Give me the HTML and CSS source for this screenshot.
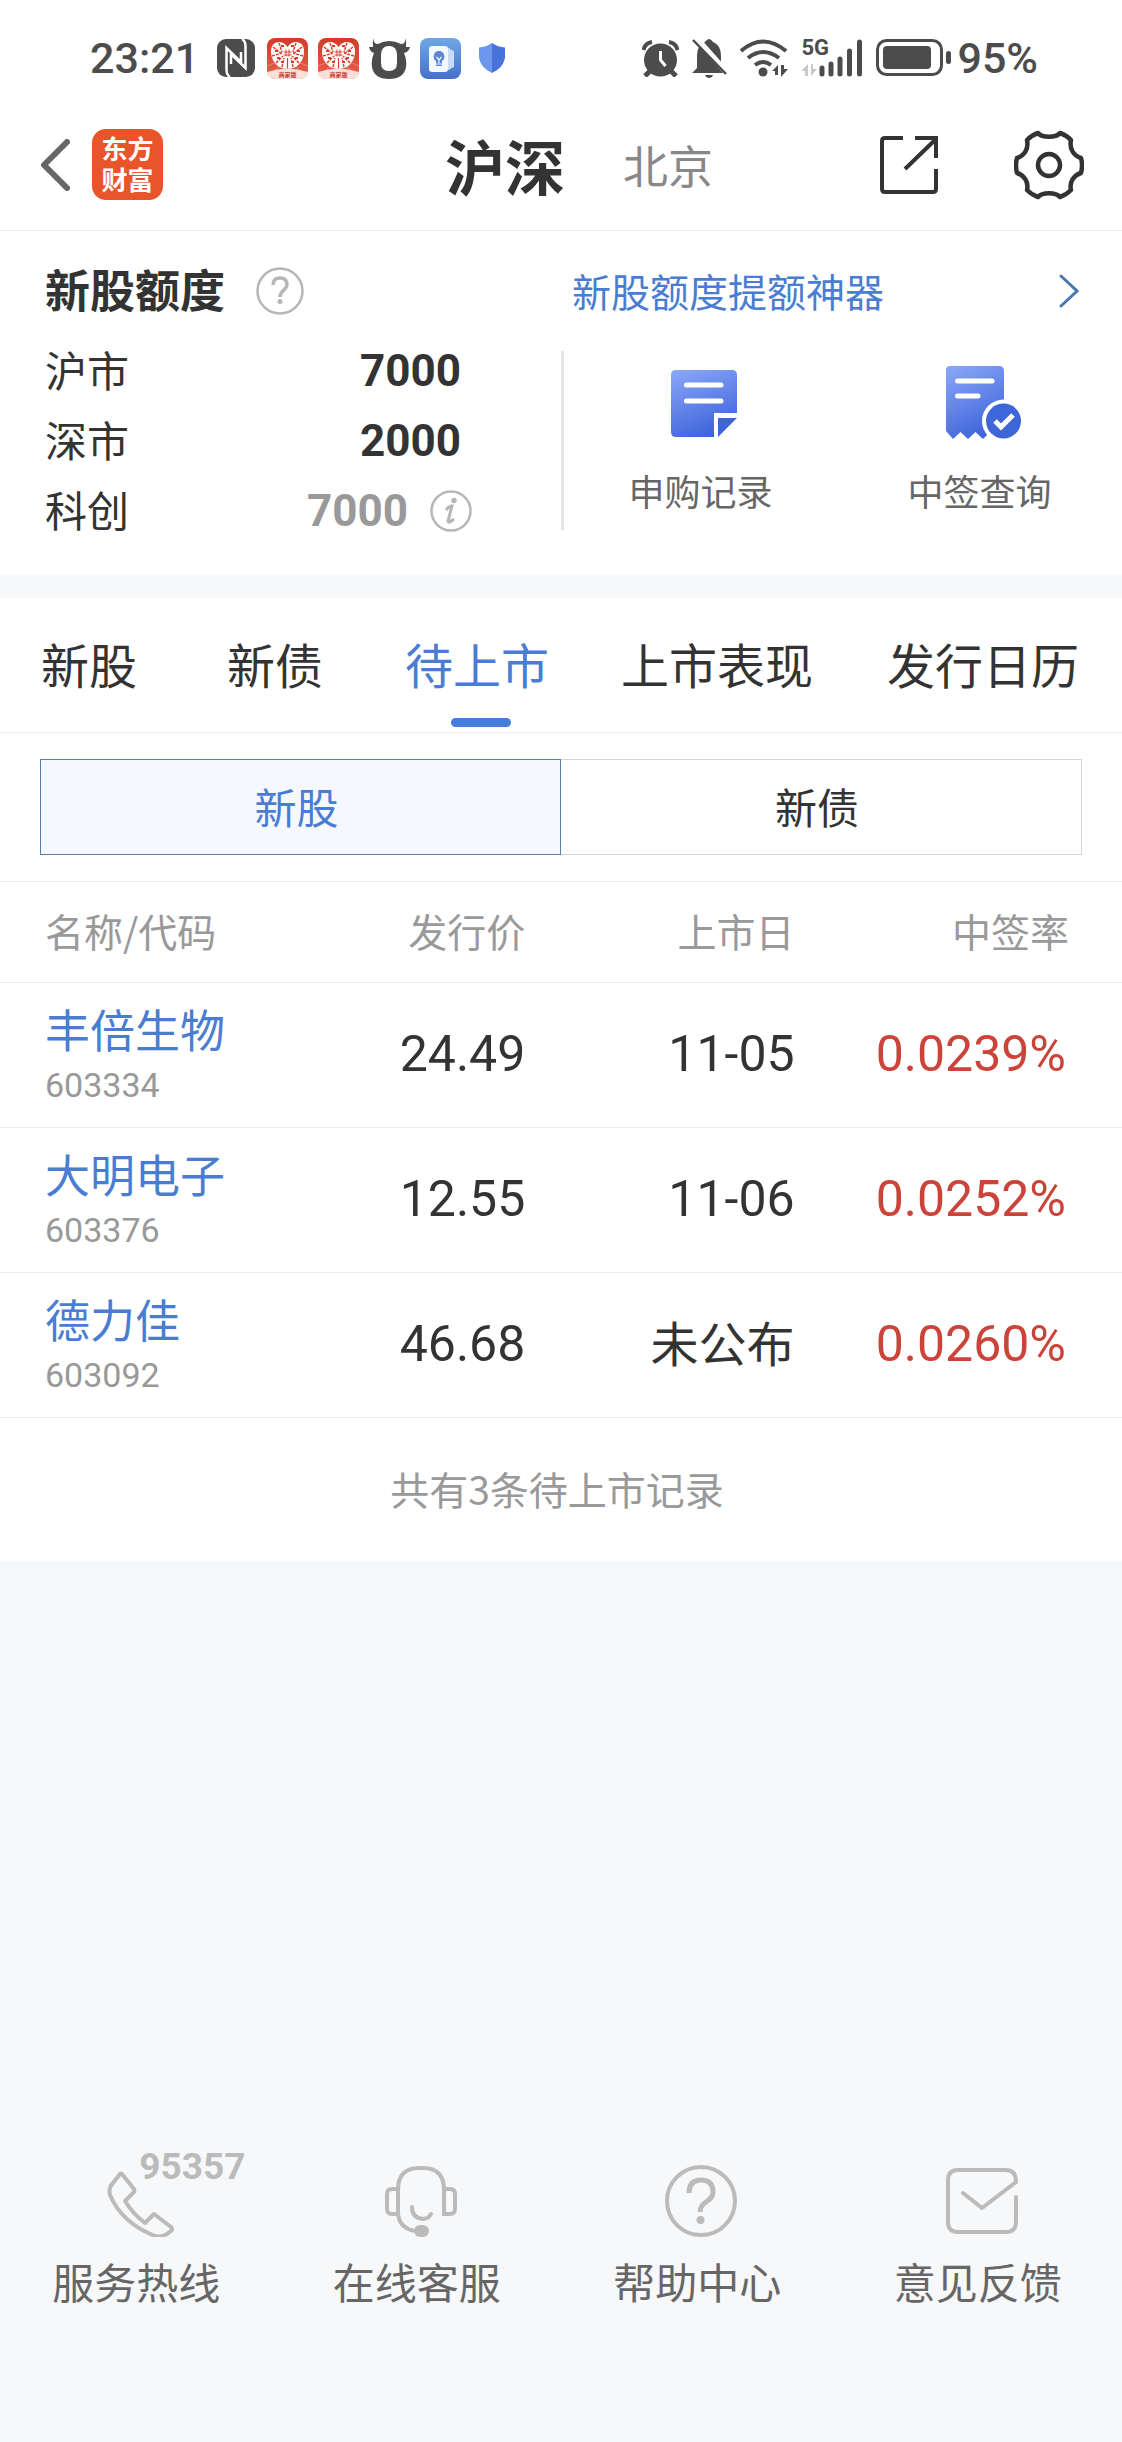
FILE: index.html
```html
<!DOCTYPE html>
<html lang="zh-CN">
<head>
<meta charset="utf-8">
<meta name="viewport" content="width=device-width, initial-scale=1">
<title>新股申购 - 待上市</title>
<link rel="stylesheet" href="styles.css">
</head>
<body>
<div class="status">
  <div class="status-side">
    <span class="clock">23:21</span>
    <svg class="nfc" width="38" height="38" viewBox="0 0 38 38"><rect width="38" height="38" rx="9" fill="#4c4c4c"/><g fill="none" stroke="#fff" stroke-width="2.500"><path d="M13 38Q9.500 36 9.500 31V9L24 23V13"/><path d="M25 0Q28.500 2 28.500 7V29L14 15V25"/></g></svg>
    <svg width="41" height="41" viewBox="0 0 41 41">
      <defs>
        <linearGradient id="red" x2="0" y2="1"><stop offset="0" stop-color="#d23a26"/><stop offset="1" stop-color="#e8604e"/></linearGradient>
        <symbol id="shop" viewBox="0 0 41 41">
          <rect width="41" height="41" rx="8" fill="url(#red)"/>
          <path d="M0 28L20 20 41 28M3 36L20 22 38 36" fill="none" stroke="#ef8273" stroke-width="1"/>
          <path d="M20.500 31Q17 31 12 29Q4 23 4 14Q4 4 12 4Q17 4 20.500 9Q24 4 29 4Q37 4 37 14Q37 23 29 29Q24 31 20.500 31Z" fill="#fff"/>
          <g fill="none" stroke="#d8402c" stroke-width="1.500"><path d="M6 9l9 7M12 5l3 9M5 18l10-3M9 25l7-7M15 29l2-9M35 9l-9 7M29 5l-3 9M36 18l-10-3M32 25l-7-7M26 29l-2-9" stroke-dasharray="3 1"/><path d="M8 13h3M10 20h3M14 8h3M14 24h3M30 13h3M28 20h3M24 8h3M24 24h3" stroke-width="2"/><path d="M20.500 20v11" stroke-width="1.200"/></g>
          <path d="M16.500 14h8M16.500 17h8M19 11.500v7M22 11.500v7" stroke="#d8402c" stroke-width="1"/>
          <path d="M0 34Q20 27 41 34Q41 41 33 41H8Q0 41 0 34Z" fill="#fadfd9"/>
          <text x="20.500" y="39" text-anchor="middle" font-size="6" font-weight="700" fill="#c4402f">商家版</text>
        </symbol>
      </defs>
      <use href="#shop"/>
    </svg>
    <svg width="41" height="41" viewBox="0 0 41 41"><use href="#shop"/></svg>
    <svg width="41" height="41" viewBox="0 0 41 41"><path d="M5 0Q4 6 9 6Q20 0 32 6Q37 6 36 0Q38 4 37 9L41 9Q40 14 35 15Q38 22 37 29Q35 41 20 41Q5 41 3 29Q2 22 5 15Q1 14 0 9L4 9Q3 4 5 0Z" fill="#4c4c4c"/><path d="M12 17Q12 8 20 8Q28 8 28 17V25Q28 33 20 33Q12 33 12 25Z" fill="#fff"/></svg>
    <svg width="41" height="41" viewBox="0 0 41 41"><defs><linearGradient id="sky" x2="0" y2="1"><stop offset="0" stop-color="#6fa8e4"/><stop offset="1" stop-color="#4670cc"/></linearGradient></defs><rect width="41" height="41" rx="8" fill="url(#sky)"/><path d="M25 9l5 1.500v21L25 33zM30 11l4 2v16l-4 2z" fill="#c9dcf6"/><rect x="9" y="8" width="19" height="26" rx="3" fill="#f4f8ff"/><path d="M19 13a5.500 5.500 0 0 0-3 10v5h6v-5a5.500 5.500 0 0 0-3-10Z" fill="#5b86d6"/><path d="M16.500 19l2.500 3 2.500-3M19 22v3M16 26h6" fill="none" stroke="#f4f8ff" stroke-width="1.200"/></svg>
    <svg class="shield" width="26" height="30" viewBox="0 0 26 30"><path d="M13 0Q7 4 0 4.500V15Q2 25 13 30Z" fill="#6d97ec"/><path d="M13 0Q19 4 26 4.500V15Q24 25 13 30Z" fill="#4a72dc"/></svg>
  </div>
  <div class="status-side right">
    <svg width="37" height="37" viewBox="0 0 37 37"><circle cx="18.500" cy="20" r="16.500" fill="#4c4c4c"/><path d="M1.500 10Q3 3 10 2M35.500 10Q34 3 27 2" fill="none" stroke="#4c4c4c" stroke-width="4"/><path d="M8 31l-5 5M29 31l5 5" stroke="#4c4c4c" stroke-width="5"/><path d="M18.500 11v9l5 6" fill="none" stroke="#fff" stroke-width="3"/></svg>
    <svg class="bell" width="35" height="40" viewBox="0 0 35 40"><path d="M5 30V18Q5 7 13 4Q17-2 21 4Q29 7 29 18V26L33 35H0Z" fill="#4c4c4c"/><path d="M13 37h8q-1 3-4 3t-4-3Z" fill="#4c4c4c"/><path d="M4 0l32 36" stroke="#fff" stroke-width="6"/><path d="M1 2l33 34" stroke="#4c4c4c" stroke-width="2.500"/></svg>
    <svg class="wifi" width="48" height="38" viewBox="0 0 48 38"><g fill="none" stroke="#4c4c4c" stroke-width="4"><path d="M1 12Q23-7 46 12M8 19Q23 7 39 19M15 26Q23 20 31 26"/></g><circle cx="23" cy="33" r="4.500" fill="#4c4c4c"/><path d="M38 26v10h-3v-4h-3zM41 38V26h3v4h4z" fill="#4c4c4c"/></svg>
    <span class="signal">
      <span class="net">5G</span>
      <svg width="62" height="38" viewBox="0 0 62 38"><path d="M7 25v12H4v-5H0zM10 37V25h2v5h4z" fill="#c8c8c8"/><g stroke="#4c4c4c" stroke-width="5" stroke-linecap="round"><path d="M21 29v6M30 25v10M39 20v15M48.500 12v23M58.500 3v32"/></g></svg>
    </span>
    <svg width="76" height="38" viewBox="0 0 76 38"><rect x="1.500" y="1.500" width="64" height="34" rx="9" fill="none" stroke="#4c4c4c" stroke-width="3"/><rect x="7" y="7" width="48" height="23" rx="4" fill="#4c4c4c"/><rect x="70" y="12" width="5" height="13" rx="2.500" fill="#4c4c4c"/></svg>
    <span class="clock">95%</span>
  </div>
</div>

<header class="header">
  <div class="header-left">
    <button class="plain" aria-label="返回"><svg width="30" height="52" viewBox="0 0 30 52"><path d="M27 3L4 26l23 23" fill="none" stroke="#666" stroke-width="6" stroke-linecap="round" stroke-linejoin="round"/></svg></button>
    <a class="logo" href="#">东方<br>财富</a>
  </div>
  <nav class="markets">
    <a class="market active" href="#">沪深</a>
    <a class="market" href="#">北京</a>
  </nav>
  <div class="header-right">
    <button class="plain" aria-label="分享"><svg width="58" height="58" viewBox="0 0 58 58"><path d="M23 2H5Q2 2 2 5V53Q2 56 5 56H53Q56 56 56 53V33M35 2H56V22M56 3L25 33" fill="none" stroke="#333" stroke-width="4"/></svg></button>
    <button class="plain" aria-label="设置"><svg width="70" height="70" viewBox="0 0 70 70"><g fill="none" stroke="#333" stroke-width="4.500" stroke-linejoin="round"><path d="M24 3C28 8 42 8 46 3Q52 5 57 10C55 19 60 26 67 28Q69 35 67 43C60 45 55 52 57 60Q52 65 46 67C42 62 28 62 24 67Q18 65 13 60C15 52 10 45 3 43Q1 35 3 28C10 26 15 19 13 10Q18 5 24 3Z"/><circle cx="35" cy="35" r="11"/></g></svg></button>
  </div>
</header>

<section class="quota">
  <div class="quota-head">
    <h2 class="quota-title">新股额度</h2>
    <button class="plain" aria-label="说明"><svg width="48" height="48" viewBox="0 0 48 48"><g fill="none" stroke="#b5b6ba" stroke-width="2.500"><circle cx="24" cy="24" r="22.500"/><path d="M17 18Q17 11 24 11T31 18C31 23 24 23 24 30" stroke-width="3.500"/></g><circle cx="24" cy="34.500" r="2.500" fill="#b5b6ba"/></svg></button>
  </div>
  <a class="boost" href="#"><span>新股额度提额神器</span><svg width="20" height="34" viewBox="0 0 20 34"><path d="M2 2l16 15L2 32" fill="none" stroke="#4a78ac" stroke-width="3" stroke-linecap="round"/></svg></a>
  <dl class="limits">
    <div class="limit"><dt>沪市</dt><dd>7000</dd></div>
    <div class="limit"><dt>深市</dt><dd>2000</dd></div>
    <div class="limit muted"><dt>科创</dt><dd>7000</dd><dd class="info"><svg width="42" height="42" viewBox="0 0 42 42"><circle cx="21" cy="21" r="19.500" fill="none" stroke="#b5b6ba" stroke-width="2.500"/><circle cx="24" cy="10.500" r="2.700" fill="#b5b6ba"/><path d="M16 20Q19 16 22 16L18 31Q18 34 24 29" fill="none" stroke="#b5b6ba" stroke-width="3"/></svg></dd></div>
  </dl>
  <div class="actions">
    <a class="action" href="#">
      <svg width="76" height="76" viewBox="0 0 76 76"><defs><linearGradient id="blue" x1="0.200" x2="0.600" y2="1"><stop offset="0" stop-color="#88a4f8"/><stop offset="1" stop-color="#3c63d8"/></linearGradient></defs><path d="M10 5H66Q71 5 71 10V48H48V72H10Q5 72 5 67V10Q5 5 10 5Z" fill="url(#blue)"/><path d="M52 53H71L52 72Z" fill="#3f66d9"/><path d="M20.500 20H55M20.500 36H55" stroke="#fff" stroke-width="5" stroke-linecap="round"/></svg>
      <span>申购记录</span>
    </a>
    <a class="action" href="#">
      <svg width="76" height="76" viewBox="0 0 76 76"><path d="M5 1H54Q59 1 59 6V66H46L38 74L30.500 67L23 74L15.500 67L8 74L1 66V5Q1 1 5 1Z" fill="url(#blue)"/><circle cx="58.500" cy="56" r="21.500" fill="#fff"/><circle cx="58.500" cy="56" r="17.500" fill="#3f66d9"/><path d="M50 56l6 6 12-12" fill="none" stroke="#fff" stroke-width="5"/><path d="M12.500 16H47M12.500 31H33" stroke="#fff" stroke-width="5" stroke-linecap="round"/></svg>
      <span>中签查询</span>
    </a>
  </div>
</section>

<main class="board">
  <nav class="tabs">
    <a class="tab" href="#">新股</a>
    <a class="tab" href="#">新债</a>
    <a class="tab active" href="#">待上市</a>
    <a class="tab" href="#">上市表现</a>
    <a class="tab" href="#">发行日历</a>
  </nav>
  <div class="segments">
    <button class="segment active">新股</button>
    <button class="segment">新债</button>
  </div>
  <table class="stocks">
    <thead>
      <tr><th class="col-name">名称/代码</th><th class="col-price">发行价</th><th class="col-date">上市日</th><th class="col-rate">中签率</th></tr>
    </thead>
    <tbody>
      <tr><td><a class="name" href="#">丰倍生物</a><span class="code">603334</span></td><td class="num">24.49</td><td class="num">11-05</td><td class="num rate">0.0239%</td></tr>
      <tr><td><a class="name" href="#">大明电子</a><span class="code">603376</span></td><td class="num">12.55</td><td class="num">11-06</td><td class="num rate">0.0252%</td></tr>
      <tr><td><a class="name" href="#">德力佳</a><span class="code">603092</span></td><td class="num">46.68</td><td class="pending">未公布</td><td class="num rate">0.0260%</td></tr>
    </tbody>
  </table>
  <p class="summary">共有3条待上市记录</p>
</main>

<footer class="help">
  <a class="help-item" href="#">
    <span class="help-icon"><svg width="72" height="72" viewBox="0 0 72 72"><path d="M18 9L30 24Q31 26 29 28L21 36Q29 49 41 58L50 49L67 62Q69 64 67 66Q59 73 51 71Q18 58 6 30Q4 23 9 18L16 9Q17 8 18 9Z" fill="none" stroke="#bbb" stroke-width="4" stroke-linejoin="round"/></svg><span class="hotline">95357</span></span>
    <span class="help-label">服务热线</span>
  </a>
  <a class="help-item" href="#">
    <svg width="72" height="72" viewBox="0 0 72 72"><g fill="none" stroke="#bbb" stroke-width="4" stroke-linecap="round"><path d="M13 49V25Q13 3 34 3H38Q59 3 59 25V49H65Q70 49 70 44V29Q70 24 65 24H59M13 24H7Q2 24 2 29V44Q2 49 7 49H13Q15 64 31 66M27 42Q27 53 38 54Q43 54 46 49"/></g><rect x="29" y="60" width="15" height="12" rx="6" fill="#bbb"/></svg>
    <span class="help-label">在线客服</span>
  </a>
  <a class="help-item" href="#">
    <svg width="72" height="72" viewBox="0 0 72 72"><g fill="none" stroke="#bbb" stroke-width="4"><circle cx="36" cy="36" r="34"/><path d="M24 28Q24 15 36 15T48 27C48 37 35 36 35 47" stroke-width="5"/></g><circle cx="35.500" cy="55" r="4" fill="#bbb"/></svg>
    <span class="help-label">帮助中心</span>
  </a>
  <a class="help-item" href="#">
    <svg width="72" height="72" viewBox="0 0 72 72"><path d="M70 32V57Q70 67 60 67H12Q2 67 2 57V15Q2 5 12 5H60Q70 5 70 17L36 43L17 28" fill="none" stroke="#bbb" stroke-width="4" stroke-linecap="round"/></svg>
    <span class="help-label">意见反馈</span>
  </a>
</footer>
</body>
</html>
```
FILE: styles.css
```css
* { box-sizing: border-box; }

body {
  margin: 0;
  min-height: 100vh;
  display: flex;
  flex-direction: column;
  background: #f6f8fa;
  color: #333;
  font-family: "Noto Sans CJK SC", sans-serif;
}

a { color: inherit; text-decoration: none; }
svg { display: block; flex: none; }
h2, dl, dd, p { margin: 0; }
button { font: inherit; color: inherit; }
.plain { padding: 0; border: 0; background: none; }

/* status bar */
.status {
  display: flex;
  justify-content: space-between;
  height: 102px;
  padding: 14px 84px 0 90px;
  background: #fff;
  color: #4c4c4c;
}
.status-side {
  display: flex;
  align-items: center;
  gap: 10px;
  height: 88px;
}
.status-side.right { gap: 13px; }
.clock {
  font: 500 43px/48px Roboto, sans-serif;
}
.nfc { margin: 0 2px 0 8px; }
.shield { margin-left: 8px; }
.signal { position: relative; }
.net {
  position: absolute;
  top: -4px;
  left: 0;
  font: 700 22px/26px Roboto, sans-serif;
}
.status-side.right .clock { margin-left: -8px; }

/* app header */
.header {
  display: grid;
  grid-template-columns: 1fr auto 1fr;
  align-items: center;
  height: 129px;
  padding: 0 38px 3px 40px;
  background: #fff;
  border-bottom: 1px solid #ebebeb;
}
.header-left { display: flex; align-items: center; gap: 22px; }
.logo {
  width: 71px;
  height: 71px;
  padding-top: 3px;
  border-radius: 14px;
  background: #e9552b;
  color: #fff;
  font-size: 26px;
  font-weight: 700;
  line-height: 31px;
  text-align: center;
}
.markets { display: flex; align-items: center; gap: 58px; margin-left: 34px; }
.market { color: #888; font-size: 45px; line-height: 72px; }
.market.active { color: #333; font-size: 60px; font-weight: 700; }
.header-right { display: flex; align-items: center; justify-content: flex-end; gap: 76px; }

/* quota */
.quota {
  display: grid;
  grid-template-columns: 1fr 1fr;
  row-gap: 21px;
  padding: 36px 0 29px;
  background: #fff;
}
.quota-head { display: flex; align-items: center; gap: 31px; height: 48px; padding-left: 45px; }
.quota-title { padding-bottom: 4px; font-size: 45px; line-height: 48px; }
.boost {
  display: flex;
  align-items: center;
  justify-content: space-between;
  height: 48px;
  padding: 0 43px 0 11px;
  color: #4a7dd2;
  font-size: 39px;
  line-height: 48px;
}
.boost span { padding-bottom: 2px; }
.limits { padding: 0 89px 0 45px; }
.limit { display: flex; align-items: center; justify-content: space-between; height: 70px; padding-right: 11px; }
.limit dt { padding-bottom: 4px; font-size: 42px; line-height: 60px; }
.limit dd { font: 700 44px/70px Roboto, sans-serif; }
.limit.muted { padding-right: 0; }
.limit.muted dd { margin-left: auto; color: #999; }
.limit.muted .info { margin-left: 22px; }
.actions {
  display: grid;
  grid-template-columns: 1fr 1fr;
  margin: 15px 0 16px;
  padding-top: 14px;
  border-left: 3px solid #e5e5e5;
}
.action { display: flex; flex-direction: column; align-items: center; gap: 25px; color: #666; font-size: 36px; line-height: 48px; }
.action span { padding-right: 6px; }

/* listing board */
.board { margin-top: 23px; background: #fff; }
.tabs {
  display: grid;
  grid-template-columns: 186fr 186fr 218fr 262fr 270fr;
  border-bottom: 1px solid #ebebeb;
}
.tab {
  position: relative;
  padding: 0 8px 4px 0;
  font-size: 48px;
  line-height: 130px;
  text-align: center;
}
.tab.active { color: #4a7dd2; }
.tab.active::after {
  content: "";
  position: absolute;
  bottom: 5px;
  left: 50%;
  width: 60px;
  height: 9px;
  margin-left: -30px;
  border-radius: 5px;
  background: #477ddb;
}
.segments { display: grid; grid-template-columns: 1fr 1fr; padding: 26px 40px; border-bottom: 1px solid #ebebeb; }
.segment {
  height: 96px;
  padding: 0 8px 4px 0;
  border: 1px solid #d5d6d8;
  border-left: 0;
  background: #fff;
  font-size: 42px;
}
.segment.active { border: 1px solid #5a7fa6; background: #f5f9ff; color: #4a7dd2; }

.stocks { width: 100%; border-collapse: collapse; table-layout: fixed; }
.stocks th {
  height: 100px;
  padding: 0 2px 4px 0;
  border-bottom: 1px solid #ebebeb;
  color: #999;
  font-size: 39px;
  font-weight: 400;
  text-align: right;
}
.stocks td { height: 145px; padding: 0 2px 2px 0; border-bottom: 1px solid #ebebeb; text-align: right; }
.stocks th:first-child, .stocks td:first-child { padding-left: 45px; text-align: left; }
.stocks th:last-child { padding-right: 53px; }
.stocks td:last-child { padding-right: 56px; }
.col-name { width: 25%; }
.col-price { width: 22%; }
.col-date { width: 24%; }
.name { display: block; margin-bottom: 6px; color: #4a7dd2; font-size: 45px; line-height: 56px; }
.code { display: block; color: #999; font: 34px/44px Roboto, sans-serif; }
.stocks .num { font: 50px/60px Roboto, sans-serif; }
.stocks .pending { padding-bottom: 8px; font-size: 48px; line-height: 60px; }
.stocks .rate { color: #cc433a; }
.summary { padding: 40px 8px 43px 0; color: #999; font-size: 39px; line-height: 60px; text-align: center; }

/* help links */
.help { display: grid; grid-template-columns: repeat(4, 1fr); margin-top: auto; padding: 40px 0 136px; }
.help-item { display: flex; flex-direction: column; align-items: center; gap: 19px; color: #666; }
.help-icon { position: relative; }
.hotline {
  position: absolute;
  top: -12px;
  left: 35px;
  color: #bbb;
  font: 700 37px/28px Roboto, sans-serif;
}
.help-label { padding-right: 8px; font-size: 42px; line-height: 50px; }
```
